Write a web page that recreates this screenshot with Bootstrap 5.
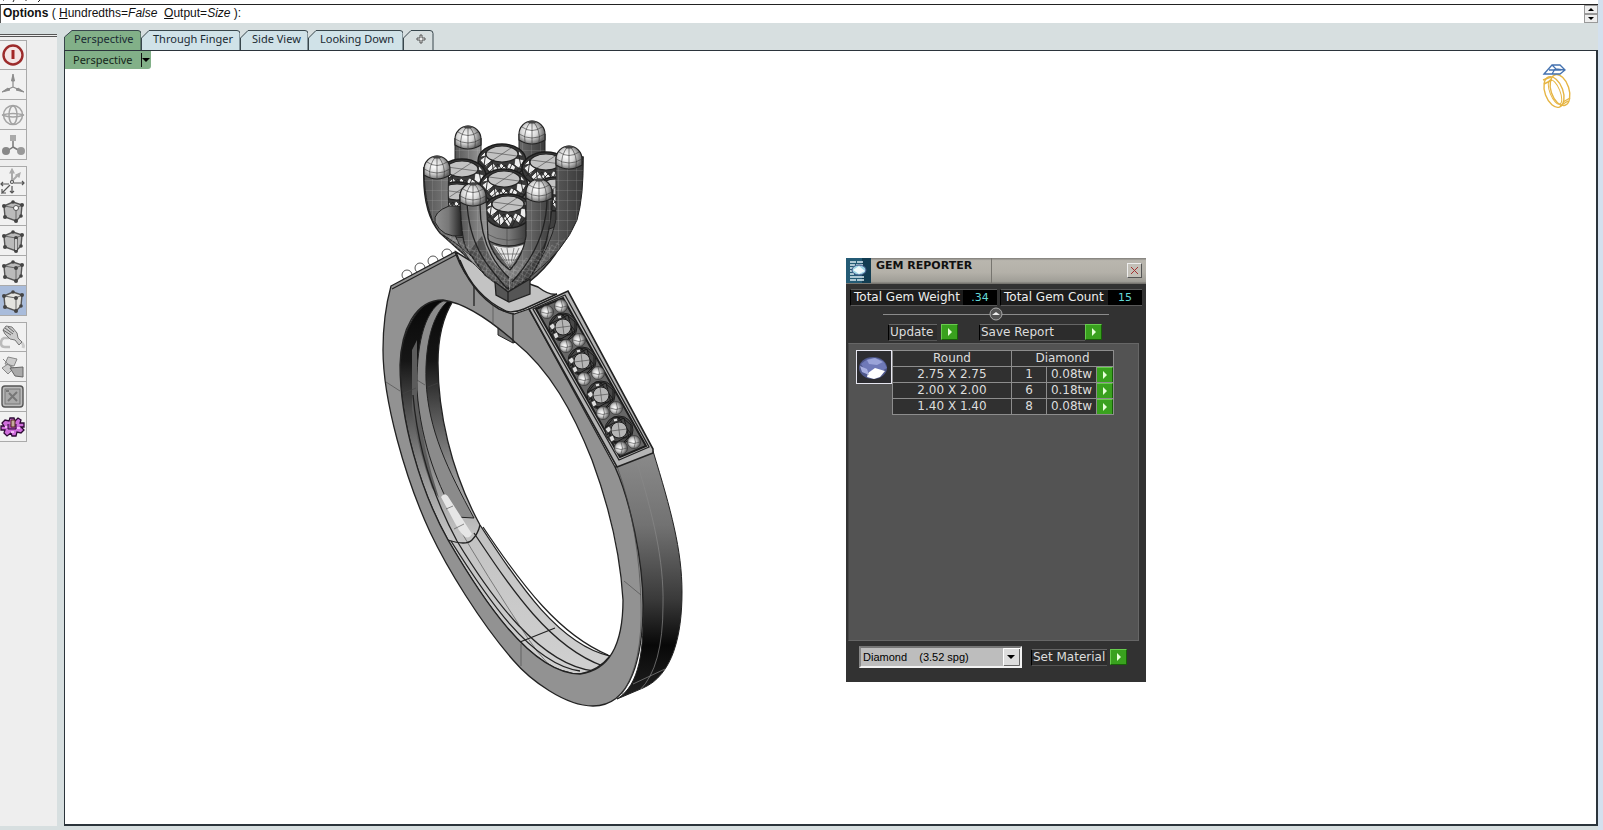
<!DOCTYPE html>
<html lang="en">
<head>
<meta charset="utf-8">
<meta name="viewport" content="width=device-width, initial-scale=1">
<title>Gem Reporter</title>
<link href="https://cdn.jsdelivr.net/npm/bootstrap@5.3.0/dist/css/bootstrap.min.css" rel="stylesheet">
<style>
body{background:#d7dfe0;color:#111;font-family:"Liberation Sans",Arial,sans-serif;font-size:12px;line-height:16px}
.history{height:4px;background:#fff;color:#111}
.command{height:19px;background:#fff;border-top:1px solid #222;border-left:1px solid #555;line-height:17px;padding-left:2px}
.rim{width:5px;background:#d3e0ee}
.spin button{width:14px;height:9px;background:#eee;border:1px solid #999;padding:0;display:flex;align-items:center;justify-content:center}
.tools{width:57px;background:#eee;margin-top:11px;border-top:1px solid #555}
.tools hr{margin:1px 0 3px;border-color:#555;opacity:1}
.tool{width:27px;height:30px;background:#f1f1f1;border:1px solid #aaa;border-left:0;padding:0;display:flex;align-items:center;justify-content:center}
.tool + .tool{border-top:0}
.tool.active{background:#a9bcdb}
.toolset{margin-bottom:6px}
.views{font-family:"Noto Sans","Open Sans",sans-serif;font-size:11px;margin-left:7px}
.tabs{height:20px;margin-top:7px}
.tab{position:relative;height:20px;padding:0 7px 3px 12px;border:0;background:none;color:#1a2a33;line-height:16px;white-space:nowrap;text-align:left}
.tab.on{padding-left:10px}
.tab svg{position:absolute;inset:0;width:100%;height:100%}
.tab span{position:relative}
.slope{fill:#d0e2e8;stroke:#38464c}
.on .slope{fill:#82b088}
.plus .slope{fill:#d7dfe0}
.view{background:#fff;border:1px solid #2b343b;border-width:1px 2px 2px 1px;position:relative;min-height:640px;overflow:hidden}
.viewlabel{width:86px;height:18px;background:#82b088;border:0;border-radius:0 0 3px 0;padding:0 0 0 8px;color:#16261a;line-height:16px}
.ring{position:absolute;left:305px;top:59px}
.logo{position:absolute;right:22px;top:12px}
.gem{position:absolute;left:781px;top:207px;width:300px;height:424px;background:#323232;color:#eee;font-family:"DejaVu Sans",Verdana,sans-serif;font-size:11px;line-height:14px}
.bar{height:26px;background:linear-gradient(#7e7c78,#b9b6ae 10%,#b4b1a9 55%,#a09e97 90%,#6d6b67);color:#111}
.bar h1{font-size:11px;font-weight:bold;line-height:15px;width:121px;height:25px;margin:0;padding-left:5px;border-right:1px solid #77756f}
.close{width:15px;height:15px;background:#c3c0b8;border:1px solid;border-color:#eee #555 #555 #eee;padding:0;margin:5px 4px 0 auto;display:flex;align-items:center;justify-content:center}
.stats{padding:5px 4px 0}
.stat{height:17px;background:#1c1c1c;border:1px solid #595959;border-left-color:#000;border-right-width:0;padding-left:3px;line-height:15px;font-size:12px}
.stat output{width:34px;height:15px;background:#000;color:#64d8d6;font-size:11px;text-align:center;display:block}
.rule{height:1px;background:#8b8b8b;width:226px;position:relative}
.knob{position:absolute;left:106px;top:-7px;padding:0;border:0;background:none;width:14px;height:14px;line-height:0}
.actions{padding:9px 0 0 42px}
.cap{height:17px;background:#2c2c2c;border:1px solid #555;border-right:0;border-top-color:#666;border-left-color:#000;padding-left:1px;line-height:15px;color:#ddd;font-size:12px;white-space:nowrap}
.go{width:17px;height:16px;background:#39a11e;border:1px solid;border-color:#68cc4e #176008 #176008 #68cc4e;padding:0;display:flex;align-items:center;justify-content:center}
.list{background:#535353;border:1px solid #666;border-left-color:#444;margin:2px 7px 0 2px;height:298px;padding:6px 0 0 7px}
.pic{width:36px;height:34px;background:#2d2d31;border:1px solid #e6e6f0;padding:1px}
.sizes{width:221px;border-collapse:collapse;color:#ddd;font-size:12px;table-layout:fixed}
.sizes td,.sizes th{height:16px;padding:0;line-height:15px;border:1px solid #8d8d8d;background:#303030;text-align:center;font-weight:normal}
.sizes .go{margin:-1px 0 -1px -1px}
.setter{padding:5px 0 0 13px}
.material{position:relative;width:163px;height:22px}
.material select{width:100%;height:22px;appearance:none;border:2px solid;border-color:#777 #f2f2f2 #f2f2f2 #888;border-radius:0;background:#bdbdbd;font:11px/16px "Liberation Sans",Arial,sans-serif;color:#000;padding:0 18px 0 2px}
.material svg{position:absolute;right:2px;top:2px;pointer-events:none}
.ln{fill:none;stroke:#222;stroke-width:1.3}
.fine{fill:none;stroke:#444;stroke-width:.6}
</style>
</head>
<body class="min-vh-100 d-flex">
<div class="flex-grow-1 d-flex flex-column">
<header>
 <div class="history d-flex"><svg width="60" height="4" aria-hidden="true"><path d="M3 0h1M14 0l-1 2M26 0v1M40 0l-2 2" stroke="#222"/></svg></div>
 <div class="command d-flex justify-content-between">
  <div><b>Options</b> ( <u>H</u>undredths=<i>False</i>&nbsp; <u>O</u>utput=<i>Size</i> ):</div>
  <div class="spin"><button aria-label="Scroll up"><svg width="6" height="3"><path d="M0 3h6L3 0z"/></svg></button><button aria-label="Scroll down"><svg width="6" height="3"><path d="M0 0h6L3 3z"/></svg></button></div>
 </div>
</header>
<main class="d-flex flex-grow-1 pb-1">
 <nav class="tools flex-shrink-0" aria-label="Tools"><hr>
  <div class="toolset">
   <button class="tool" aria-label="Record history"><svg width="24" height="24"><circle cx="12" cy="12" r="9.5" fill="#f4e5e5" stroke="#9c2b2b" stroke-width="2.4"/><path d="M12 7v9" stroke="#a32727" stroke-width="3"/></svg></button>
   <button class="tool" aria-label="Gumball"><svg width="24" height="24" fill="#8c8c8c" stroke="#8c8c8c"><path d="M12 14V4M12 14L3 18M12 14L21 18" stroke-width="1.2"/><path d="M12 1l-1.500 7h3zM1 19l6-4 2 2zM23 19l-6-4-2 2z"/></svg></button>
   <button class="tool" aria-label="Rotate"><svg width="24" height="24" fill="none" stroke="#a3a3a3" stroke-width="1.5"><circle cx="12" cy="12" r="9.500"/><ellipse cx="12" cy="12" rx="4" ry="9"/><path d="M1 12q11 4 22 0M1 12q11-3 22 0"/></svg></button>
   <button class="tool" aria-label="Scale"><svg width="24" height="24" fill="#999"><path d="M12 6v8L6 18M12 14l7 4" stroke="#777" stroke-width="1.5" fill="none"/><path d="M9 2h6v6H9z" fill="#aaa"/><circle cx="5" cy="18" r="4" fill="#888"/><circle cx="20" cy="18" r="4"/></svg></button>
  </div>
  <div class="toolset">
   <button class="tool" aria-label="Axes"><svg width="26" height="26" fill="none" stroke="#555" stroke-width="1.2"><path d="M12 13V4" stroke="#aaa" stroke-width="2"/><path d="M10 5l2-4 2 4zM16 7l4-2-1 4z" fill="#aaa" stroke="#aaa"/><path d="M12 13l5-5" stroke="#aaa" stroke-width="2"/><path d="M1 16h8M3 14l-2 2 2 2M14 15h10M22 13l2 2-2 2M12 18v7M10 23l2 2 2-2M10 17l-8 8v-4M2 25h4"/><circle cx="12" cy="14" r="1.5" fill="#fff"/></svg></button>
   <button class="tool" aria-label="Vertices"><svg width="26" height="26"><use href="#cube"/><circle cx="16" cy="10" r="2.5" fill="#fff" stroke="#555"/></svg></button>
   <button class="tool" aria-label="Edges"><svg width="26" height="26"><use href="#cube"/><path d="M16 11v11" stroke="#333" stroke-width="3"/><path d="M16 11v11" stroke="#fff" stroke-width="1.5"/></svg></button>
   <button class="tool" aria-label="Faces"><svg width="26" height="26"><use href="#cube"/></svg></button>
   <button class="tool active" aria-label="Objects"><svg width="26" height="26"><path d="M4 8l12 2v13L5 19zM16 10l6-3-1 11-5 5M4 8l9-4 9 3-6 3z" fill="#e4e4e0"/><use href="#cube" style="--face:none"/></svg></button>
  </div>
  <div class="toolset">
   <button class="tool" aria-label="Brush"><svg width="26" height="26"><path d="M9 14H4q-3 1-3 5t4 4h5" stroke="#bbb" stroke-width="2.5" fill="none"/><path d="M18 17q7 2 5 7" stroke="#ccc" stroke-width="3" fill="none"/><path d="M3 6l3-4 6 1 5 6 1 5 4 4-3 3-4-5-5-1-5-5z" fill="#ccc" stroke="#777"/><path d="M3 6l8 5M5 4l8 6M8 3l6 5" stroke="#666"/></svg></button>
   <button class="tool" aria-label="Layers"><svg width="26" height="26" fill="#ccc" stroke="#888"><path d="M8 3l9 2-3 7-9-2zM2 14l6-4 6 4-6 6zM3 5l17 17"/><path d="M10 14l13-1v10l-8-1z" fill="#aaa" stroke="#666"/></svg></button>
   <button class="tool" aria-label="Block"><svg width="26" height="26"><rect x="2" y="2" width="21" height="21" rx="3" fill="#bbb" stroke="#555" stroke-width="1.4"/><rect x="5" y="5" width="15" height="15" fill="#aaa" stroke="#777"/><path d="M9 9l8 8M17 8l-9 9M6 7h3" stroke="#777" stroke-width="2"/></svg></button>
   <button class="tool" aria-label="Options"><svg width="26" height="26"><path d="M10 4h4l1 3 3-3 3 2-1 3h4v4h-3l3 3-3 3-4-1-1 4h-4l-1-3-4 3-3-3 1-3H1v-4h3L2 9l3-3 4 1z" fill="#cf6ddb" stroke="#2d0a35" stroke-width="1.3"/><path d="M5 13h3M17 14h3M11 18h3" stroke="#f3b8f8" stroke-width="2"/><path d="M8 10v5h8v-5" fill="#a948b5" stroke="#2d0a35"/><path d="M11 6h4v7h-4z" fill="#c4aa9a" stroke="#522"/></svg></button>
  </div>
 </nav>
 <section class="views flex-grow-1 d-flex flex-column">
  <div class="tabs d-flex" role="tablist">
   <button class="tab on" style="width:77px" role="tab" aria-selected="true"><svg viewBox="0 0 77 20" preserveAspectRatio="none"><path class="slope" d="M.5 20V7L8 .5h66q3 0 3 3V20"/></svg><span>Perspective</span></button>
   <button class="tab" style="width:99px" role="tab"><svg viewBox="0 0 99 20" preserveAspectRatio="none"><path class="slope" d="M.5 20V8L8 .5h88q3 0 3 3V20"/></svg><span>Through Finger</span></button>
   <button class="tab" style="width:68px" role="tab"><svg viewBox="0 0 68 20" preserveAspectRatio="none"><path class="slope" d="M.5 20V8L8 .5h57q3 0 3 3V20"/></svg><span>Side View</span></button>
   <button class="tab" style="width:95px" role="tab"><svg viewBox="0 0 95 20" preserveAspectRatio="none"><path class="slope" d="M.5 20V8L8 .5h84q3 0 3 3V20"/></svg><span>Looking Down</span></button>
   <button class="tab plus" style="width:31px" aria-label="Add view"><svg viewBox="0 0 31 20"><path class="slope" d="M.5 20V8L8 .5h19q3 0 3 3V20"/><path d="M17 5h2v3h3v2h-3v3h-2v-3h-3V8h3z" fill="#eee" stroke="#555"/></svg></button>
  </div>
  <div class="view flex-grow-1">
   <button class="viewlabel d-flex justify-content-between align-items-center">Perspective<svg width="10" height="16"><path d="M.5 1v14" stroke="#111"/><path d="M1 6h8l-4 4z"/></svg></button>

   <svg class="ring" width="330" height="610" viewBox="370 110 330 610" role="img" aria-label="Ring model">
    <defs>
     <g id="cube"><path d="M4 8l9-4 9 3-1 11-5 5-11-4z" stroke="#555" stroke-width="1.4" style="fill:var(--face,#bbb)"/><path d="M4 8l12 2 6-3M16 10v13" stroke="#666" fill="none"/><g fill="#444"><circle cx="4" cy="8" r="2"/><circle cx="13" cy="4" r="1.8"/><circle cx="22" cy="7" r="2"/><circle cx="16" cy="10" r="2"/><circle cx="5" cy="19" r="2"/><circle cx="16" cy="23" r="2"/><circle cx="21" cy="18" r="1.8"/></g></g>
     <linearGradient id="side" x1="0" y1="450" x2="0" y2="700" gradientUnits="userSpaceOnUse"><stop offset="0" stop-color="#8b8b8b"/><stop offset=".3" stop-color="#727272"/><stop offset=".6" stop-color="#393939"/><stop offset=".78" stop-color="#080808"/><stop offset="1" stop-color="#222"/></linearGradient>
     <linearGradient id="wall" x1="0" y1="300" x2="0" y2="660" gradientUnits="userSpaceOnUse"><stop offset="0" stop-color="#080808"/><stop offset=".17" stop-color="#161616"/><stop offset=".32" stop-color="#555"/><stop offset=".5" stop-color="#999"/><stop offset=".65" stop-color="#c3c3c3"/><stop offset="1" stop-color="#cfcfcf"/></linearGradient>
     <linearGradient id="tube"><stop offset="0" stop-color="#555"/><stop offset=".3" stop-color="#999"/><stop offset=".65" stop-color="#747474"/><stop offset="1" stop-color="#3a3a3a"/></linearGradient>
     <radialGradient id="dome" cx=".4" cy=".45" r=".6"><stop offset="0" stop-color="#fff"/><stop offset=".5" stop-color="#d8d8d8"/><stop offset="1" stop-color="#666"/></radialGradient>
     <radialGradient id="ball" cx=".4" cy=".5" r=".6"><stop offset="0" stop-color="#fff"/><stop offset=".4" stop-color="#d6d6d6"/><stop offset="1" stop-color="#555"/></radialGradient>
     <linearGradient id="cup"><stop offset="0" stop-color="#909090"/><stop offset=".5" stop-color="#787878"/><stop offset="1" stop-color="#222"/></linearGradient>
     <pattern id="net" width="4" height="4" patternUnits="userSpaceOnUse" patternTransform="rotate(30)"><path d="M0 0H4M0 0V4" stroke="#ddd" stroke-width=".5" opacity=".65"/></pattern>
     <pattern id="mesh" width="9" height="10" patternUnits="userSpaceOnUse"><path d="M0 0H9M0 0V10" stroke="#ccc" stroke-width=".5" opacity=".6"/></pattern>
     <g id="pearl"><circle r="6.5" fill="url(#ball)" stroke="#333" stroke-width=".7"/><path d="M-6 0Q0 3 6 0M0-6Q3 0 0 6" class="fine"/></g>
     <g id="stone"><ellipse rx="24" ry="17" fill="#3a3a3a" stroke="#1c1c1c" stroke-width="1.5"/><g fill="#ededed" stroke="#222" stroke-width=".7"><path d="M-22-1l7-5 5 5-6 7zM-15 8l6-6 6 7-4 6zM-1 2l6 6-4 8-6-8zM7 2l7 3-3 7-7-4zM13-3l9 2-4 9-6-3z"/><path d="M-22-4l5-5 2 4zM21-5l-4-5-3 4z"/></g><path d="M-23 0L-13 11L-4 3L4 16L10 3L20 9M-20 7L-10 0L-8 15L3 4L12 14L22 0M-16-10L-18 5M16-10L19 6" fill="none" stroke="#222" stroke-width=".9"/><ellipse cy="-7" rx="16" ry="8" fill="#c2c2c2" stroke="#222" stroke-width="1.2"/><path d="M-15-9L15-5M-9-1L9-13" class="fine"/></g>
     <g id="tip"><path d="M-13 5V-1A13 13 0 0 1 13-1V5Q0 13-13 5z" fill="url(#dome)" stroke="#222" stroke-width="1.2"/><path d="M-13-1Q0 7 13-1M-10-8Q0-1 10-8M0-14V8M-1-14Q-9-4-7 7M1-14Q9-4 7 7" fill="none" stroke="#333" stroke-width=".6"/><ellipse cy="-13" rx="4" ry="1.5" fill="#444"/></g>
     <g id="set"><circle r="14" fill="#484848" stroke="#1c1c1c"/><path d="M-13-3L-5-13L4-12L12-5L12 5L4 13L-7 11ZM-12 5L0-12L12 4L-4 13L-13-3L5-12L10 8L-11 7" fill="none" stroke="#181818"/><g fill="#ddd" stroke="#222" stroke-width=".7"><path d="M-14-1l4-3 3 4-4 3zM-10 7l4-2 2 5-4 2zM-6-11l4-1 1 3-4 1z"/></g><circle r="8" fill="#b5b5b5" stroke="#222"/><path d="M-8 1L8-1M-1-8L1 8" class="fine"/></g>
    </defs>
    <!-- Inside wall of the band -->
    <path d="M443 300C420 297 401 330 400 365C400 420 420 490 448 540C480 595 530 674 580 674Q598 671 610 656C560 645 520 587 480 525C450 470 438 410 438 363Q438 325 453 301z" fill="url(#wall)" stroke="#222" stroke-width="1.3"/>
    <path d="M443 301C423 311 416 350 417 390C421 445 440 490 456 517L474 518C448 470 428 430 426 380C425 345 432 315 448 301z" fill="#8b8b8b" stroke="#222"/>
    <path d="M412 350V410Q418 450 432 488L439 498Q423 450 417 400V340z" fill="#5c5c5c"/>
    <path d="M413 395C417 440 430 491 457 541C491 597 540 665 594 671M474 533C512 590 550 647 603 666" class="ln"/>
    <path d="M456 523Q485 573 527 637T601 669M402 394l14-6M425 385l-8-5M438 383l-10 4" class="fine"/>
    <path d="M441 497Q445 491 449 498L472 534Q466 544 456 525z" fill="#e6e6e6"/><path d="M446 509l7-3M454 529l10-5" class="fine"/>
    <path d="M448 540Q466 546 472 540T480 525M520 642L555 628" class="ln"/>
    <path d="M451 541C485 595 530 664 580 671M483 527C523 587 560 635 608 655" class="ln"/>
    <path d="M498 325v10l15 8 6-2v-10z" fill="#777" stroke="#222"/>
    <!-- Outside and front faces -->
    <path d="M615 467L653 451C671 510 682 550 682 592C682 635 673 675 643 688L617 699C640 685 644 650 643 603C641 560 631 505 615 467z" fill="url(#side)" stroke="#222"/>
    <path d="M636 459C653 515 664 560 663 605Q663 667 640 690M633 684L665 669" fill="none" stroke="#888" stroke-width=".7"/>
    <g fill="#fff" stroke="#555"><circle cx="407" cy="275" r="5"/><circle cx="420" cy="268" r="5"/><circle cx="433" cy="261" r="5"/><circle cx="447" cy="254" r="5"/></g>
    <path fill-rule="evenodd" d="M391 286L455 252Q463 275 477 287Q499 313 514 314L529 309L615 467C630 500 643 560 643 605C643 655 632 706 593 706C565 706 530 680 513 660C480 622 447 568 430 532C405 478 383 400 383 350Q383 315 391 286zM515 342Q472 304 443 300C415 300 401 330 400 365C400 420 420 490 448 540C480 595 530 674 580 674C612 670 623 640 623 600C620 550 609 506 592 460C573 412 550 370 515 342z" fill="#929292" stroke="#222" stroke-width="1.3"/>
    <path d="M617 466C633 510 640 560 641 604Q643 662 622 694M386 382l14 9M624 581l17 14M521 644v22M493 302v23" class="fine"/><path d="M474 284v22M513 313v30M392 289L456 255" class="ln"/>
    <!-- Shoulder and channel of small stones -->
    <path d="M456 252L479 266L538 287Q550 296 557 294L524 309Q510 315 499 309Q470 292 456 252z" fill="#c3c3c3" stroke="#222" stroke-width="1.5"/>
    <path d="M460 260Q474 296 506 311" class="ln"/>
    <path d="M529 309L568 291L653 449L653 453L617 467z" fill="#b5b5b5" stroke="#222" stroke-width="1.6"/>
    <path d="M533 309L565 295L649 447L619 460z" class="ln"/>
    <path d="M536 309L563 298L646 446L620 457z" fill="#676767" stroke="#1d1d1d" stroke-width="2"/>
    <use href="#set" x="563" y="327"/><use href="#set" x="582" y="361"/><use href="#set" x="601" y="395"/><use href="#set" x="619" y="430"/>
    <use href="#pearl" x="547" y="312"/><use href="#pearl" x="561" y="306"/><use href="#pearl" x="566" y="346"/><use href="#pearl" x="579" y="340"/><use href="#pearl" x="584" y="379"/><use href="#pearl" x="598" y="373"/><use href="#pearl" x="603" y="413"/><use href="#pearl" x="616" y="408"/><use href="#pearl" x="621" y="448"/><use href="#pearl" x="634" y="442"/>
    <!-- Head: back prongs, stones, cups, front prongs -->
    <path d="M455 138h26v42h-26zM519 134h26v40h-26z" fill="url(#tube)" stroke="#222"/><path d="M455 138h26v42h-26zM519 134h26v40h-26z" fill="url(#mesh)"/>
    <use href="#tip" x="468" y="140"/><use href="#tip" x="532" y="135"/>
    <path d="M424 168Q422 212 440 233L497 284L529 282Q582 240 583 157L555 160L540 190H465L449 165z" fill="#666" stroke="#222" stroke-width="1.5"/>
    <use href="#stone" x="502" y="161"/><use href="#stone" x="462" y="176"/><use href="#stone" x="546" y="169"/>
    <path d="M435 203V225Q448 242 478 236V203zM540 195V232Q566 225 577 210V190z" fill="url(#cup)" stroke="#222"/>
    <use href="#stone" x="457" y="199"/><use href="#stone" x="556" y="194"/>
    <use href="#stone" x="504" y="186"/>
    <path d="M484 214V238Q508 254 534 238V214z" fill="url(#cup)" stroke="#222" stroke-width="1.4"/><path d="M485 233Q508 247 533 234M507 225v22" class="fine"/>
    <use href="#stone" x="508" y="211"/>
    <path d="M424 167Q424 212 440 233Q470 250 497 284Q462 258 455 235Q446 220 449 167zM583 157Q584 195 577 220Q565 250 530 277Q551 245 556 220V157z" fill="url(#tube)" stroke="#222"/>
    <path d="M424 167Q424 212 440 233Q470 250 497 284Q462 258 455 235Q446 220 449 167zM583 157Q584 195 577 220Q565 250 530 277Q551 245 556 220V157z" fill="url(#mesh)"/>
    <path d="M449 206Q433 212 435 222Q442 238 462 236L460 206z" fill="url(#cup)" stroke="#222"/>
    <path d="M493 245Q508 251 526 244L510 269z" fill="#e8e8e8"/><path d="M496 247l14 21 14-21M501 248l9 20 9-20M507 248l3 20 4-20M494 254h30M498 260h22" class="fine"/>
    <path d="M460 195Q461 238 466 248L485 275L508 292L530 277Q551 248 553 190L526 195V236Q523 256 510 270Q493 258 488 238L486 195z" fill="url(#tube)" stroke="#222" stroke-width="1.3"/>
    <path d="M482 236Q490 266 509 276V292Q480 278 469 251zM510 268V292L531 276Q545 252 549 235Q535 265 510 280z" fill="#222" opacity=".5"/>
    <path d="M460 195Q461 238 466 248L485 275L508 292L530 277Q551 248 553 190L526 195V236Q523 256 510 270Q493 258 488 238L486 195z" fill="url(#mesh)"/>
    <path d="M440 233Q475 245 492 258L510 272L526 258Q547 247 566 238L530 277L510 292L495 284z" fill="url(#net)"/>
    <path d="M467 200Q468 240 490 268T508 287M480 205Q480 250 509 278M547 200Q546 245 512 282" class="ln"/>
    <use href="#tip" x="437" y="170"/><use href="#tip" x="569" y="160"/><use href="#tip" x="473" y="197"/><use href="#tip" x="539" y="193"/>
    <path d="M495 282L508 292L530 279V294L509 302L496 295z" fill="#555" stroke="#222" stroke-width="1.3"/><path d="M508 291v11" class="ln"/>
   </svg>

   <svg class="logo" width="34" height="48" fill="none"><g stroke="#e6b544" stroke-width="1.4"><ellipse cx="14" cy="29" rx="9" ry="16" transform="rotate(-20 14 29)"/><ellipse cx="20" cy="27" rx="9" ry="16" transform="rotate(-18 20 27)"/><ellipse cx="15" cy="29" rx="5" ry="13" transform="rotate(-22 15 29)" stroke-width="1"/><path d="M3 17l8-3M4 21l8-4M23 39l7-4M20 43l8-5"/></g><path d="M4 11l8-9h8l5 5-5 4zM12 2l4 4 8 1M15 6l-3 5M9 7h12" stroke="#4472b0" stroke-width="1.3"/></svg>

   <section class="gem" aria-label="Gem Reporter">
    <div class="bar d-flex">
     <svg width="25" height="26"><path d="M0 0h25v25H0z" fill="#245b75"/><path d="M16 0h9v25h-9z" fill="#123d52"/><path d="M4 4h6m1 0h6M4 7h5m1 0h7M4 10h3M4 13h3M4 16h4M4 19h14M4 22h6m1 0h7" stroke="#dcecf2" stroke-width="1.5"/><ellipse cx="13" cy="12" rx="7" ry="5" fill="#9ad3e2" stroke="#458"/><path d="M7 12l6-4 6 5-6 3z" fill="#eef8fb"/></svg>
     <h1>GEM REPORTER</h1>
     <button class="close" aria-label="Close"><svg width="9" height="9"><path d="M1 1l7 7M8 1L1 8" stroke="#a33030"/></svg></button>
    </div>
    <div class="stats d-flex justify-content-between">
     <div class="stat d-flex justify-content-between" style="width:147px"><label for="w">Total Gem Weight</label><output id="w">.34</output></div>
     <div class="stat d-flex justify-content-between" style="width:142px"><label for="c">Total Gem Count</label><output id="c">15</output></div>
    </div>
    <div class="rule mx-auto mt-2"><button class="knob" aria-label="Collapse"><svg width="14" height="14"><circle cx="7" cy="7" r="6" fill="#555" stroke="#aaa"/><path d="M3 8h8L7 5z" fill="#eee"/></svg></button></div>
    <div class="actions d-flex">
     <label class="cap" for="up" style="width:49px">Update</label><button id="up" class="go ms-1" aria-label="Update"><svg width="6" height="8"><path d="M1 0v8l4-4z" fill="#e6ffd8"/></svg></button>
     <label class="cap" for="save" style="width:106px;margin-left:21px">Save Report</label><button id="save" class="go" aria-label="Save Report"><svg width="6" height="8"><path d="M1 0v8l4-4z" fill="#e6ffd8"/></svg></button>
    </div>
    <div class="list d-flex align-items-start">
     <div class="pic"><svg width="32" height="30"><ellipse cx="15" cy="16" rx="14" ry="11" fill="#4f588c"/><path d="M3 12Q14 1 26 10l3 6-7 4H8z" fill="#6f79b8"/><path d="M9 8l8-2 8 4-6 3-8-1z" fill="#9aa3d8"/><path d="M10 21l7-5 10 3-5 6-6 2-7-2z" fill="#fff"/><path d="M2 14l7 3 2 6-7-3z" fill="#a8afe0"/></svg></div>
     <table class="sizes"><colgroup><col style="width:119px"><col style="width:35px"><col style="width:50px"><col style="width:17px"></colgroup>
      <thead><tr><th>Round</th><th colspan="3">Diamond</th></tr></thead>
      <tbody>
       <tr><td>2.75 X 2.75</td><td>1</td><td>0.08tw</td><td><button class="go" aria-label="Select 2.75"><svg width="6" height="8"><path d="M1 0v8l4-4z" fill="#e6ffd8"/></svg></button></td></tr>
       <tr><td>2.00 X 2.00</td><td>6</td><td>0.18tw</td><td><button class="go" aria-label="Select 2.00"><svg width="6" height="8"><path d="M1 0v8l4-4z" fill="#e6ffd8"/></svg></button></td></tr>
       <tr><td>1.40 X 1.40</td><td>8</td><td>0.08tw</td><td><button class="go" aria-label="Select 1.40"><svg width="6" height="8"><path d="M1 0v8l4-4z" fill="#e6ffd8"/></svg></button></td></tr>
      </tbody></table>
    </div>
    <div class="setter d-flex align-items-center">
     <div class="material"><select aria-label="Material"><option>Diamond &nbsp;&nbsp; (3.52 spg)</option></select><svg width="17" height="18"><path d="M0 0h17v18H0z" fill="#ddd"/><path d="M.5 17V.5H17" stroke="#fff" fill="none"/><path d="M16.5 1v16.5H1" stroke="#666" fill="none"/><path d="M4 7h8l-4 4z"/></svg></div>
     <label class="cap" for="mat" style="width:76px;margin-left:9px">Set Material</label><button id="mat" class="go" style="margin-left:3px" aria-label="Set Material"><svg width="6" height="8"><path d="M1 0v8l4-4z" fill="#e6ffd8"/></svg></button>
    </div>
   </section>
  </div>
 </section>
</main>
</div>
<div class="rim flex-shrink-0"></div>
<script src="https://cdn.jsdelivr.net/npm/bootstrap@5.3.0/dist/js/bootstrap.bundle.min.js"></script>
</body>
</html>
